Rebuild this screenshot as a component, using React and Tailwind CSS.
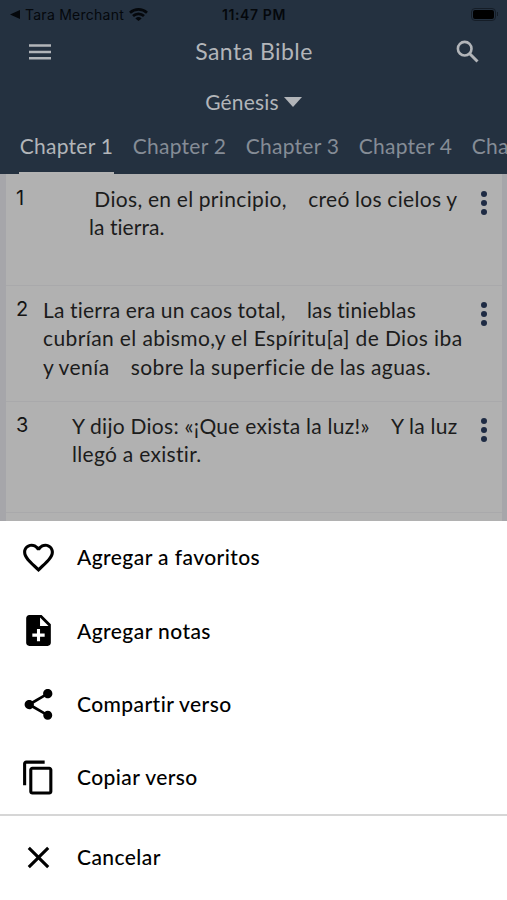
import React from 'react';
import { MdClose, MdContentCopy, MdFavoriteBorder, MdNoteAdd, MdShare } from 'react-icons/md';

const chapters = ['Chapter 1', 'Chapter 2', 'Chapter 3', 'Chapter 4', 'Chapter 5'];

const verses = [
    {
        number: 1,
        height: 'h-[111px]',
        indent: 'ml-[45px]',
        lines: [
            { text: ' Dios, en el principio,    creó los cielos y', tracking: 'tracking-[0.34px] [word-spacing:-0.4px]' },
            { text: 'la tierra.', tracking: 'tracking-[0.05px]' },
        ],
    },
    {
        number: 2,
        height: 'h-[116px]',
        indent: 'ml-[-1px]',
        lines: [
            { text: 'La tierra era un caos total,    las tinieblas', tracking: 'tracking-[0.22px] [word-spacing:-0.3px]' },
            { text: 'cubrían el abismo,y el Espíritu[a] de Dios iba', tracking: 'tracking-[0.39px]' },
            { text: 'y venía    sobre la superficie de las aguas.', tracking: 'tracking-[0.47px] [word-spacing:-0.6px]' },
        ],
    },
    {
        number: 3,
        height: 'h-[111px]',
        indent: 'ml-[28px]',
        lines: [
            { text: 'Y dijo Dios: «¡Que exista la luz!»    Y la luz', tracking: 'tracking-[0.3px] [word-spacing:-0.2px]' },
            { text: 'llegó a existir.', tracking: 'tracking-[0.3px]' },
        ],
    },
];

const actions = [
    { label: 'Agregar a favoritos', icon: MdFavoriteBorder },
    { label: 'Agregar notas', icon: MdNoteAdd },
    { label: 'Compartir verso', icon: MdShare },
    { label: 'Copiar verso', icon: MdContentCopy },
];

function StatusBar() {
    return (
        <div className="grid h-7 grid-cols-3 items-center pr-[9px] pl-[10px] font-['Inter',sans-serif] text-[14px] text-[#05080c]">
            <div className="flex items-center whitespace-nowrap">
                <svg className="mr-[5px] h-[9px] w-[10px]" viewBox="0 0 10 9" fill="currentColor">
                    <path d="M0 4.5 10 0v9z" />
                </svg>
                <span className="tracking-[0.25px]">Tara Merchant</span>
                <svg className="ml-[5px] h-[13px] w-[19px]" viewBox="0 0 19 13" fill="none" stroke="currentColor" strokeWidth="2.7">
                    <path d="M1 4.8a12.5 12.5 0 0 1 17 0" />
                    <path d="M4 8.1a8 8 0 0 1 11 0" />
                    <path d="M6.400 10.4a4.600 4.600 0 0 1 6.200 0L9.500 13z" fill="currentColor" stroke="none" />
                </svg>
            </div>
            <span className="text-center font-semibold tracking-[0.6px]">11:47 PM</span>
            <div className="flex items-center justify-end gap-px">
                <div className="h-[13px] w-[25px] rounded-[4px] border border-[#151d27] p-px">
                    <div className="h-full rounded-[2px] bg-black" />
                </div>
                <div className="h-1 w-px bg-[#151d27]" />
            </div>
        </div>
    );
}

function Verse({ verse }) {
    return (
        <li className={`flex border-b border-[#a9a9ab] pl-[10px] ${verse.height}`}>
            <span className="w-[28px] shrink-0 pt-[9px] font-['Inter',sans-serif] text-[20px] leading-[28px] text-[#141414]">{verse.number}</span>
            <div className={`flex-1 pt-[10px] text-[21px] leading-[28.3px] text-[#1c1c1c] ${verse.indent}`}>
                {verse.lines.map((line) => (
                    <p key={line.text} className={`whitespace-pre ${line.tracking}`}>{line.text}</p>
                ))}
            </div>
            <button className="flex w-[37px] shrink-0 flex-col items-center gap-[3px] pt-[16px]">
                <span className="size-[6px] rounded-full bg-[#1e2b44]" />
                <span className="size-[6px] rounded-full bg-[#1e2b44]" />
                <span className="size-[6px] rounded-full bg-[#1e2b44]" />
            </button>
        </li>
    );
}

function ActionRow({ label, icon: Icon }) {
    return (
        <button className="flex h-[73.3px] w-full items-center pl-[20px] text-left">
            <Icon className="size-[37px] shrink-0" />
            <span className="ml-5 pb-px text-[21px] font-medium tracking-[0.42px]">{label}</span>
        </button>
    );
}

export default function App() {
    return (
        <div className="flex h-[900px] w-[507px] flex-col overflow-hidden bg-white font-['Lato',sans-serif]">
            <header className="h-[174px] shrink-0 bg-[#243140] text-[#b2b5b9]">
                <StatusBar />
                <div className="flex h-[48px] items-center justify-between pr-[24px] pl-[25px]">
                    <svg className="size-[30px]" viewBox="0 0 30 30" fill="none" stroke="currentColor" strokeWidth="2.6">
                        <path d="M4 8.500h22M4 15h22M4 21.200h22" />
                    </svg>
                    <h1 className="pb-px text-[23px] tracking-[0.45px]">Santa Bible</h1>
                    <svg className="size-[30px]" viewBox="0 0 30 30" fill="none" stroke="currentColor" strokeWidth="2.6">
                        <circle cx="11.700" cy="11.700" r="6.800" />
                        <path d="m16.500 16.500 8 8" strokeWidth="3" />
                    </svg>
                </div>
                <button className="mx-auto mt-[12px] flex h-7 items-center gap-[5px] text-[21px]">
                    <span className="tracking-[0.2px]">Génesis</span>
                    <svg className="h-[10px] w-[18px]" viewBox="0 0 18 10" fill="currentColor">
                        <path d="M0 0h18L9 10z" />
                    </svg>
                </button>
                <nav className="mt-[4px] flex h-[54px] gap-[18px] overflow-hidden pl-[19px] text-[21px]">
                    {chapters.map((chapter, i) => (
                        <span
                            key={chapter}
                            className={`w-[95px] shrink-0 pt-[11px] text-center leading-[30px] tracking-[0.25px] whitespace-nowrap ${
                                i === 0 ? 'border-b-2 border-[#b3b3b3]' : 'text-[#858c96]'
                            }`}
                        >
                            {chapter}
                        </span>
                    ))}
                </nav>
            </header>

            <main className="h-[347px] shrink-0 overflow-hidden border-r-[5px] border-l-[6px] border-[#a6a6aa] bg-[#b1b1b1] pt-px">
                <ul>
                    {verses.map((verse) => (
                        <Verse key={verse.number} verse={verse} />
                    ))}
                </ul>
            </main>

            <section className="flex-1 bg-white text-black">
                {actions.map((action) => (
                    <ActionRow key={action.label} {...action} />
                ))}
                <div className="h-[2px] bg-[#d6d6d6]" />
                <div className="pt-[4.500px]">
                    <ActionRow label="Cancelar" icon={MdClose} />
                </div>
            </section>
        </div>
    );
}
